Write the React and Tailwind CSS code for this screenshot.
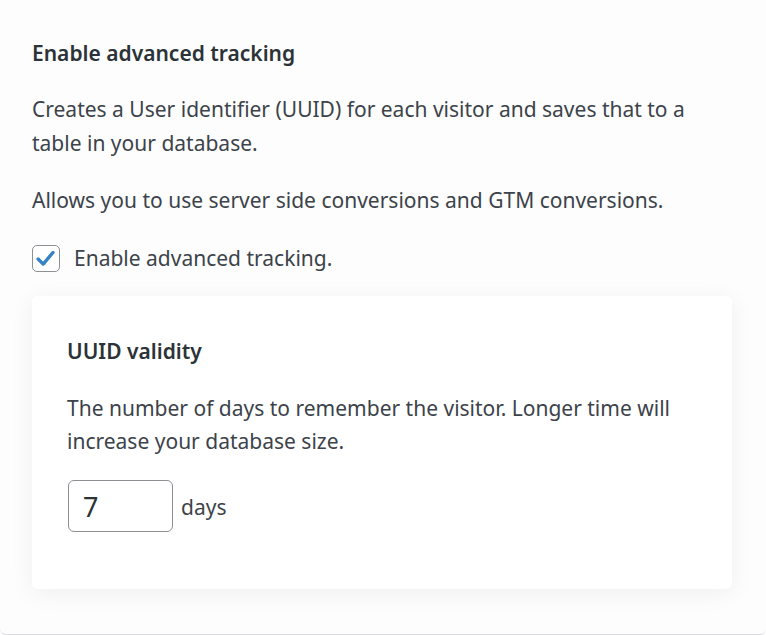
export default function App() {
  return (
    <div className="min-h-screen bg-white" style={{ fontFamily: '"Noto Sans", "Open Sans", sans-serif' }}>
      <div className="h-[635px] bg-[#fdfdfd] border-b border-[#dcdcde] rounded-b-[6px] px-[32px] pt-[38px] text-[#3c434a]">
        <h2 className="text-[21px] font-semibold leading-[30px] text-[#2c3338]">Enable advanced tracking</h2>
        <p className="mt-[24px] text-[21px] leading-[34px] max-w-[690px]">
          Creates a User identifier (UUID) for each visitor and saves that to a table in your database.
        </p>
        <p className="mt-[23px] text-[21px] leading-[34px]">
          Allows you to use server side conversions and GTM conversions.
        </p>
        <label className="mt-[24px] flex items-center gap-[14px] text-[21px] leading-[34px]">
          <span className="w-[28px] h-[27px] rounded-[5px] border border-[#8c8f94] bg-white flex items-center justify-center">
            <svg viewBox="0 0 28 27" className="w-[28px] h-[27px]">
              <path d="M5.5 14 L11 19.5 L21.5 7" fill="none" stroke="#3582c4" strokeWidth="3.6" strokeLinecap="round" strokeLinejoin="round" />
            </svg>
          </span>
          Enable advanced tracking.
        </label>
        <div className="mt-[21px] w-[700px] h-[293px] bg-white rounded-[6px] shadow-[0_4px_24px_rgba(0,0,0,0.06)] px-[35px] pt-[40px]">
          <h3 className="text-[21px] font-semibold leading-[30px] text-[#2c3338]">UUID validity</h3>
          <p className="mt-[26px] text-[21px] leading-[33px] max-w-[650px]">
            The number of days to remember the visitor. Longer time will increase your database size.
          </p>
          <div className="mt-[22px] flex items-center gap-[8px]">
            <input
              type="text"
              defaultValue="7"
              className="ml-[1px] w-[105px] h-[52px] rounded-[6px] border border-[#8c8f94] px-[14px] text-[27px] text-[#2c3338] bg-white outline-none"
            />
            <span className="text-[21px] mt-[4px]">days</span>
          </div>
        </div>
      </div>
    </div>
  );
}
